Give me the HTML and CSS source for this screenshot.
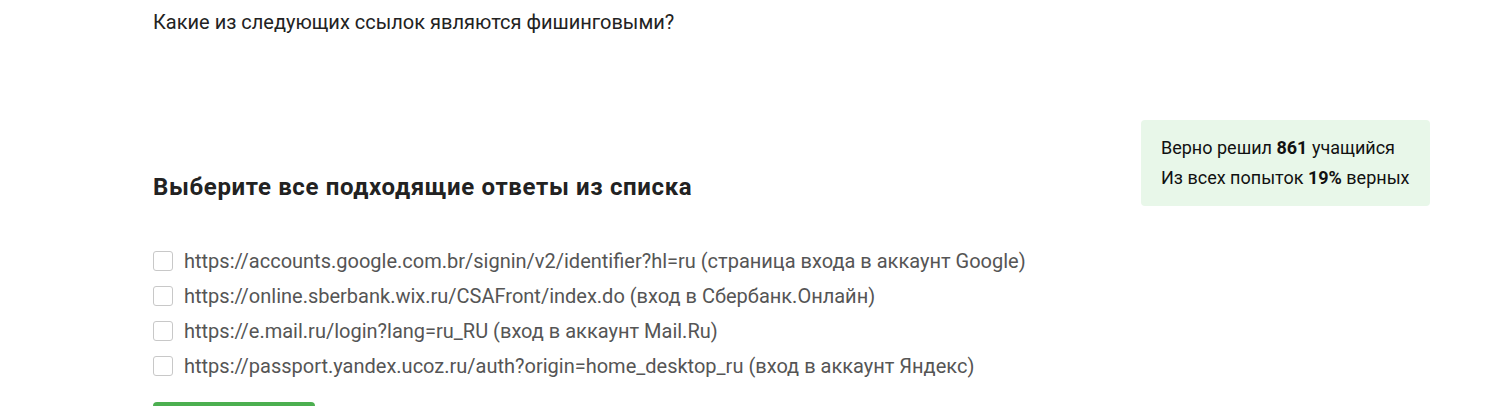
FILE: index.html
```html
<!DOCTYPE html>
<html lang="ru">
<head>
<meta charset="utf-8">
<link rel="stylesheet" href="styles.css">
</head>
<body>
<div class="page">
  <p class="question">Какие из следующих ссылок являются фишинговыми?</p>
  <div class="task">
    <div class="task-main">
      <h2 class="task-title">Выберите все подходящие ответы из списка</h2>
      <ul class="options">
        <li class="option"><span class="box"></span><span class="label">https://accounts.google.com.br/signin/v2/identifier?hl=ru (страница входа в аккаунт Google)</span></li>
        <li class="option"><span class="box"></span><span class="label">https://online.sberbank.wix.ru/CSAFront/index.do (вход в Сбербанк.Онлайн)</span></li>
        <li class="option"><span class="box"></span><span class="label">https://e.mail.ru/login?lang=ru_RU (вход в аккаунт Mail.Ru)</span></li>
        <li class="option"><span class="box"></span><span class="label">https://passport.yandex.ucoz.ru/auth?origin=home_desktop_ru (вход в аккаунт Яндекс)</span></li>
      </ul>
      <button class="submit">Проверить</button>
    </div>
    <div class="stats">
      <div class="stats-line">Верно решил <b>861</b> учащийся</div>
      <div class="stats-line">Из всех попыток <b>19%</b> верных</div>
    </div>
  </div>
</div>
</body>
</html>
```
FILE: styles.css
```css
html, body {
  margin: 0;
  padding: 0;
  background: #fff;
}
body {
  font-family: Roboto, "Noto Sans", sans-serif;
  color: #222;
  overflow: hidden;
}
.page {
  padding: 0 55px 0 153px;
}
.question {
  margin: 0;
  padding-top: 8px;
  font-size: 20px;
  line-height: 28px;
  color: #222;
}
.task {
  display: flex;
  align-items: flex-start;
  justify-content: space-between;
  margin-top: 84px;
}
.task-main {
  display: flex;
  flex-direction: column;
  align-items: flex-start;
}
.task-title {
  margin: 51px 0 0;
  font-size: 24px;
  line-height: 32px;
  font-weight: 700;
  letter-spacing: 0.65px;
  color: #222;
}
.options {
  list-style: none;
  margin: 40px 0 0;
  padding: 0;
}
.option {
  display: flex;
  align-items: center;
  height: 35px;
}
.box {
  width: 20px;
  height: 20px;
  border: 1px solid #c8c8c8;
  border-radius: 3px;
  box-sizing: border-box;
  margin-right: 11px;
  flex: none;
}
.label {
  font-size: 20px;
  color: #555;
}
.submit {
  margin-top: 19px;
  width: 162px;
  height: 44px;
  border: 0;
  border-radius: 4px;
  background: #4caf50;
  color: #fff;
  font-family: Roboto, sans-serif;
  font-size: 18px;
}
.stats {
  background: #e8f7e9;
  border-radius: 4px;
  width: 289px;
  box-sizing: border-box;
  padding: 13px 20px 13px;
}
.stats-line {
  font-size: 18px;
  line-height: 30px;
  color: #111;
}
.stats-line b {
  font-weight: 700;
}
```
